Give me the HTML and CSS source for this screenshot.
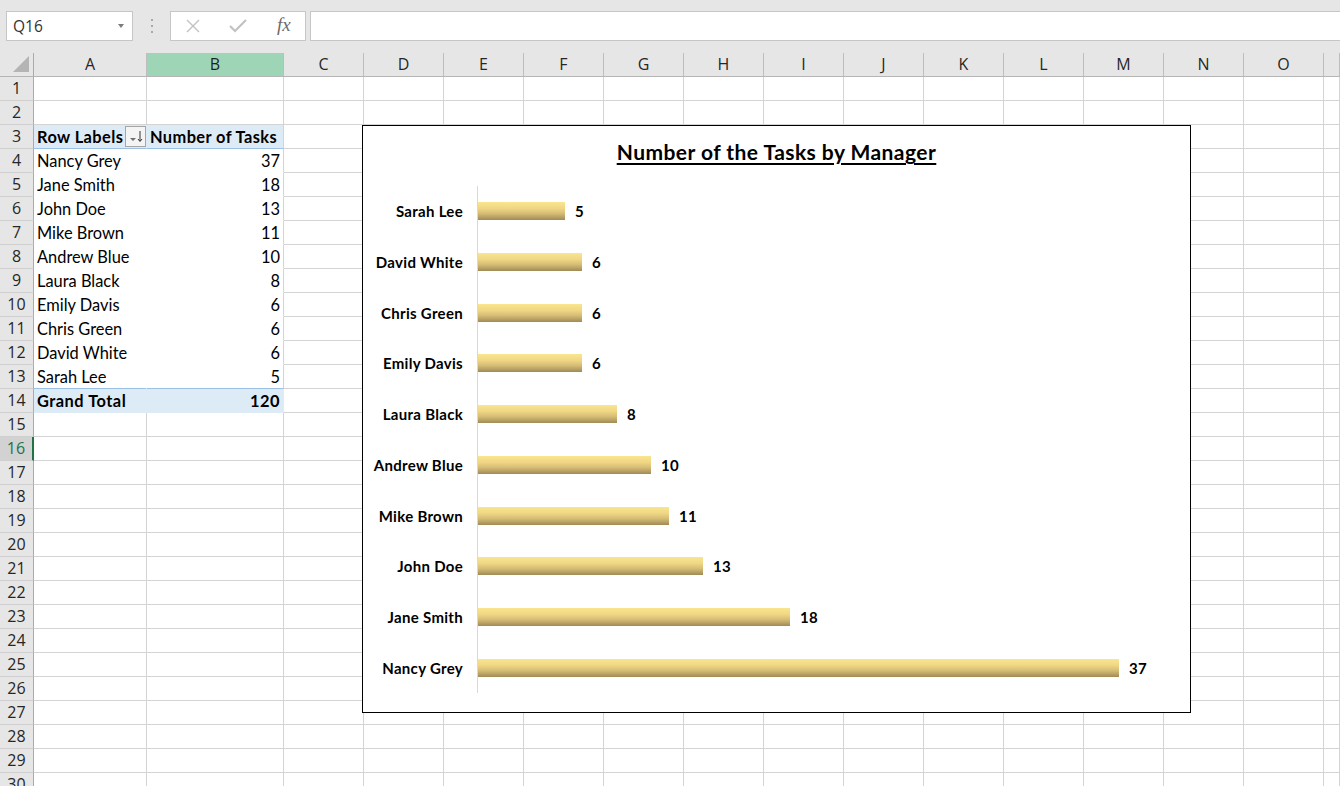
FILE: index.html
```html
<!DOCTYPE html>
<html>
<head>
<meta charset="utf-8">
<title>Tasks by Manager</title>
<link rel="stylesheet" href="styles.css">
</head>
<body>
<div class="app">
  <div class="toolbar">
    <div class="namebox"><span>Q16</span><span class="dd"></span></div>
    <div class="grip"><b></b><b></b><b></b></div>
    <div class="fbtns">
      <svg class="ic-x" width="16" height="14" viewBox="0 0 16 14"><path d="M2 1 L14 13 M14 1 L2 13" stroke="#c2c2c2" stroke-width="1.4" fill="none"/></svg>
      <svg class="ic-ok" width="18" height="14" viewBox="0 0 18 14"><path d="M1 7 L6 12 L17 1" stroke="#c2c2c2" stroke-width="2.2" fill="none"/></svg>
      <span class="fx">fx</span>
    </div>
    <div class="finput"></div>
  </div>

  <div class="sheet">
    <div class="colh">
      <div class="corner"><svg width="17" height="17" viewBox="0 0 17 17"><path d="M16 0 L16 16 L0 16 Z" fill="#b4b4b4"/></svg></div>
      <div>A</div><div class="csel">B</div><div>C</div><div>D</div><div>E</div><div>F</div><div>G</div><div>H</div><div>I</div><div>J</div><div>K</div><div>L</div><div>M</div><div>N</div><div>O</div><div></div>
    </div>

    <div class="row"><div class="rh">1</div><i></i><i></i><i></i><i></i><i></i><i></i><i></i><i></i><i></i><i></i><i></i><i></i><i></i><i></i><i></i><i></i></div>
    <div class="row"><div class="rh">2</div><i></i><i></i><i></i><i></i><i></i><i></i><i></i><i></i><i></i><i></i><i></i><i></i><i></i><i></i><i></i><i></i></div>
    <div class="row"><div class="rh">3</div><div class="ph pa"><span>Row Labels</span><span class="filter"><svg width="19" height="19" viewBox="0 0 19 19"><path d="M4 11 L10 11 L7 14 Z" fill="#6f6f6f"/><path d="M14 4 L14 14 M12 12 L14 14.5 L16 12" stroke="#333" stroke-width="1" fill="none"/></svg></span></div><div class="ph pb">Number of Tasks</div><i></i><i></i><i></i><i></i><i></i><i></i><i></i><i></i><i></i><i></i><i></i><i></i><i></i><i></i></div>
    <div class="row"><div class="rh">4</div><div class="pv pa">Nancy Grey</div><div class="pv num">37</div><i></i><i></i><i></i><i></i><i></i><i></i><i></i><i></i><i></i><i></i><i></i><i></i><i></i><i></i></div>
    <div class="row"><div class="rh">5</div><div class="pv pa">Jane Smith</div><div class="pv num">18</div><i></i><i></i><i></i><i></i><i></i><i></i><i></i><i></i><i></i><i></i><i></i><i></i><i></i><i></i></div>
    <div class="row"><div class="rh">6</div><div class="pv pa">John Doe</div><div class="pv num">13</div><i></i><i></i><i></i><i></i><i></i><i></i><i></i><i></i><i></i><i></i><i></i><i></i><i></i><i></i></div>
    <div class="row"><div class="rh">7</div><div class="pv pa">Mike Brown</div><div class="pv num">11</div><i></i><i></i><i></i><i></i><i></i><i></i><i></i><i></i><i></i><i></i><i></i><i></i><i></i><i></i></div>
    <div class="row"><div class="rh">8</div><div class="pv pa">Andrew Blue</div><div class="pv num">10</div><i></i><i></i><i></i><i></i><i></i><i></i><i></i><i></i><i></i><i></i><i></i><i></i><i></i><i></i></div>
    <div class="row"><div class="rh">9</div><div class="pv pa">Laura Black</div><div class="pv num">8</div><i></i><i></i><i></i><i></i><i></i><i></i><i></i><i></i><i></i><i></i><i></i><i></i><i></i><i></i></div>
    <div class="row"><div class="rh">10</div><div class="pv pa">Emily Davis</div><div class="pv num">6</div><i></i><i></i><i></i><i></i><i></i><i></i><i></i><i></i><i></i><i></i><i></i><i></i><i></i><i></i></div>
    <div class="row"><div class="rh">11</div><div class="pv pa">Chris Green</div><div class="pv num">6</div><i></i><i></i><i></i><i></i><i></i><i></i><i></i><i></i><i></i><i></i><i></i><i></i><i></i><i></i></div>
    <div class="row"><div class="rh">12</div><div class="pv pa">David White</div><div class="pv num">6</div><i></i><i></i><i></i><i></i><i></i><i></i><i></i><i></i><i></i><i></i><i></i><i></i><i></i><i></i></div>
    <div class="row"><div class="rh">13</div><div class="pv pa last">Sarah Lee</div><div class="pv num last">5</div><i></i><i></i><i></i><i></i><i></i><i></i><i></i><i></i><i></i><i></i><i></i><i></i><i></i><i></i></div>
    <div class="row"><div class="rh">14</div><div class="tot">Grand Total</div><div class="tot num">120</div><i></i><i></i><i></i><i></i><i></i><i></i><i></i><i></i><i></i><i></i><i></i><i></i><i></i><i></i></div>
    <div class="row"><div class="rh">15</div><i></i><i></i><i></i><i></i><i></i><i></i><i></i><i></i><i></i><i></i><i></i><i></i><i></i><i></i><i></i><i></i></div>
    <div class="row"><div class="rh rsel">16</div><i></i><i></i><i></i><i></i><i></i><i></i><i></i><i></i><i></i><i></i><i></i><i></i><i></i><i></i><i></i><i></i></div>
    <div class="row"><div class="rh">17</div><i></i><i></i><i></i><i></i><i></i><i></i><i></i><i></i><i></i><i></i><i></i><i></i><i></i><i></i><i></i><i></i></div>
    <div class="row"><div class="rh">18</div><i></i><i></i><i></i><i></i><i></i><i></i><i></i><i></i><i></i><i></i><i></i><i></i><i></i><i></i><i></i><i></i></div>
    <div class="row"><div class="rh">19</div><i></i><i></i><i></i><i></i><i></i><i></i><i></i><i></i><i></i><i></i><i></i><i></i><i></i><i></i><i></i><i></i></div>
    <div class="row"><div class="rh">20</div><i></i><i></i><i></i><i></i><i></i><i></i><i></i><i></i><i></i><i></i><i></i><i></i><i></i><i></i><i></i><i></i></div>
    <div class="row"><div class="rh">21</div><i></i><i></i><i></i><i></i><i></i><i></i><i></i><i></i><i></i><i></i><i></i><i></i><i></i><i></i><i></i><i></i></div>
    <div class="row"><div class="rh">22</div><i></i><i></i><i></i><i></i><i></i><i></i><i></i><i></i><i></i><i></i><i></i><i></i><i></i><i></i><i></i><i></i></div>
    <div class="row"><div class="rh">23</div><i></i><i></i><i></i><i></i><i></i><i></i><i></i><i></i><i></i><i></i><i></i><i></i><i></i><i></i><i></i><i></i></div>
    <div class="row"><div class="rh">24</div><i></i><i></i><i></i><i></i><i></i><i></i><i></i><i></i><i></i><i></i><i></i><i></i><i></i><i></i><i></i><i></i></div>
    <div class="row"><div class="rh">25</div><i></i><i></i><i></i><i></i><i></i><i></i><i></i><i></i><i></i><i></i><i></i><i></i><i></i><i></i><i></i><i></i></div>
    <div class="row"><div class="rh">26</div><i></i><i></i><i></i><i></i><i></i><i></i><i></i><i></i><i></i><i></i><i></i><i></i><i></i><i></i><i></i><i></i></div>
    <div class="row"><div class="rh">27</div><i></i><i></i><i></i><i></i><i></i><i></i><i></i><i></i><i></i><i></i><i></i><i></i><i></i><i></i><i></i><i></i></div>
    <div class="row"><div class="rh">28</div><i></i><i></i><i></i><i></i><i></i><i></i><i></i><i></i><i></i><i></i><i></i><i></i><i></i><i></i><i></i><i></i></div>
    <div class="row"><div class="rh">29</div><i></i><i></i><i></i><i></i><i></i><i></i><i></i><i></i><i></i><i></i><i></i><i></i><i></i><i></i><i></i><i></i></div>
    <div class="row"><div class="rh">30</div><i></i><i></i><i></i><i></i><i></i><i></i><i></i><i></i><i></i><i></i><i></i><i></i><i></i><i></i><i></i><i></i></div>

    <div class="chart">
      <div class="ctitle">Number of the Tasks by Manager</div>
      <div class="plot">
        <div class="cat"><span class="lbl">Sarah Lee</span><span class="track"><span class="bar" style="width:87px"></span><span class="val">5</span></span></div>
        <div class="cat"><span class="lbl">David White</span><span class="track"><span class="bar" style="width:104px"></span><span class="val">6</span></span></div>
        <div class="cat"><span class="lbl">Chris Green</span><span class="track"><span class="bar" style="width:104px"></span><span class="val">6</span></span></div>
        <div class="cat"><span class="lbl">Emily Davis</span><span class="track"><span class="bar" style="width:104px"></span><span class="val">6</span></span></div>
        <div class="cat"><span class="lbl">Laura Black</span><span class="track"><span class="bar" style="width:139px"></span><span class="val">8</span></span></div>
        <div class="cat"><span class="lbl">Andrew Blue</span><span class="track"><span class="bar" style="width:173px"></span><span class="val">10</span></span></div>
        <div class="cat"><span class="lbl">Mike Brown</span><span class="track"><span class="bar" style="width:191px"></span><span class="val">11</span></span></div>
        <div class="cat"><span class="lbl">John Doe</span><span class="track"><span class="bar" style="width:225px"></span><span class="val">13</span></span></div>
        <div class="cat"><span class="lbl">Jane Smith</span><span class="track"><span class="bar" style="width:312px"></span><span class="val">18</span></span></div>
        <div class="cat"><span class="lbl">Nancy Grey</span><span class="track"><span class="bar" style="width:641px"></span><span class="val">37</span></span></div>
      </div>
    </div>
  </div>
</div>
</body>
</html>
```
FILE: styles.css
```css
html, body {
  margin: 0;
  padding: 0;
  width: 1340px;
  height: 786px;
  overflow: hidden;
  background: #ffffff;
}

.app {
  width: 1340px;
  height: 786px;
  overflow: hidden;
  font-family: Lato, "Liberation Sans", sans-serif;
}

/* ---------- toolbar ---------- */
.toolbar {
  height: 53px;
  background: #e6e6e6;
  display: flex;
  align-items: flex-start;
  padding-top: 11px;
  box-sizing: border-box;
}

.namebox {
  margin-left: 6px;
  width: 127px;
  height: 30px;
  box-sizing: border-box;
  background: #fff;
  border: 1px solid #c6c6c6;
  display: flex;
  align-items: center;
  justify-content: space-between;
  padding: 0 8px 0 6px;
  font-family: "Open Sans", "Noto Sans", sans-serif;
  font-size: 15.5px;
  color: #333;
}

.dd {
  width: 0;
  height: 0;
  border-left: 3.5px solid transparent;
  border-right: 3.5px solid transparent;
  border-top: 4px solid #7a7a7a;
}

.grip {
  width: 37px;
  height: 30px;
  display: flex;
  flex-direction: column;
  align-items: center;
  justify-content: center;
  gap: 4px;
}

.grip b {
  width: 2px;
  height: 2px;
  background: #a9a9a9;
}

.fbtns {
  width: 136px;
  height: 30px;
  box-sizing: border-box;
  background: #fff;
  border: 1px solid #c6c6c6;
  display: flex;
  align-items: center;
  padding-left: 14px;
}

.ic-x { margin-right: 28px; }
.ic-ok { margin-right: 30px; }

.fx {
  font-family: "Liberation Serif", serif;
  font-style: italic;
  font-size: 19px;
  color: #6b6b6b;
  margin-top: -2px;
}

.finput {
  margin-left: 4px;
  flex: 1;
  height: 30px;
  box-sizing: border-box;
  background: #fff;
  border: 1px solid #c6c6c6;
  border-right: none;
}

/* ---------- sheet ---------- */
.sheet {
  position: relative;
}

.colh,
.row {
  display: grid;
  grid-template-columns: 34px 113px 137px repeat(13, 80px) 16px;
  height: 24px;
}

.colh > * {
  box-sizing: border-box;
  background: #e6e6e6;
  border-right: 1px solid #bdbdbd;
  border-bottom: 1px solid #b5b5b5;
  text-align: center;
  font-family: "Open Sans", "Noto Sans", sans-serif;
  font-size: 16px;
  line-height: 23px;
  color: #262626;
}

.colh .corner {
  border-right-color: #ababab;
  display: flex;
  align-items: flex-end;
  justify-content: flex-end;
  padding: 0 3px 3px 0;
}

.colh .corner svg { display: block; }

.colh .csel {
  background: #9fd5b7;
  color: #1f1f1f;
}

.row > * {
  box-sizing: border-box;
  border-right: 1px solid #d4d4d4;
  border-bottom: 1px solid #d4d4d4;
  font-style: normal;
  font-family: Lato, "Liberation Sans", sans-serif;
  font-size: 16.4px;
  line-height: 22px;
  padding: 1px 3px 0 3px;
  white-space: nowrap;
  overflow: hidden;
  color: #000;
}

.row > .rh {
  background: #e6e6e6;
  border-right-color: #ababab;
  border-bottom-color: #cfcfcf;
  text-align: center;
  padding: 0;
  line-height: 23px;
  font-family: "Open Sans", "Noto Sans", sans-serif;
  font-size: 16px;
  color: #262626;
}

.row > .rsel {
  background: #d2d2d2;
  color: #217346;
  border-right: 2px solid #217346;
}

/* pivot table */
.row > .ph {
  background: #ddebf7;
  font-weight: 700;
  letter-spacing: 0.4px;
  border-bottom-color: #9bc2e6;
}

.row > .ph.pa {
  border-right-color: #ddebf7;
  display: flex;
  align-items: center;
  justify-content: space-between;
  padding-right: 0;
  padding-top: 0;
}

.row > .ph.pa span:first-child {
  padding-top: 1px;
}

.filter {
  width: 21px;
  height: 21px;
  box-sizing: border-box;
  border: 1px solid #a6a6a6;
  background: #f4f4f4;
  display: flex;
  align-items: center;
  justify-content: center;
}

.filter svg { display: block; }

.row > .pv {
  border-bottom-color: #ffffff;
}

.row > .pv.pa {
  border-right-color: #ffffff;
}

.row > .last {
  border-bottom-color: #9bc2e6;
}

.row > .tot {
  background: #ddebf7;
  font-weight: 700;
  letter-spacing: 0.5px;
  border-right-color: #ddebf7;
  border-bottom-color: #ddebf7;
}

.row > .num {
  text-align: right;
}

/* ---------- chart ---------- */
.chart {
  position: absolute;
  left: 362px;
  top: 72px;
  width: 829px;
  height: 588px;
  box-sizing: border-box;
  border: 1px solid #000;
  background: #fff;
  display: flex;
  flex-direction: column;
  font-family: Lato, "Liberation Sans", sans-serif;
}

.ctitle {
  margin-top: 14px;
  text-align: center;
  font-weight: 700;
  font-size: 21px;
  letter-spacing: 0.45px;
  line-height: 24px;
  text-decoration: underline;
  text-underline-offset: 3px;
  text-decoration-thickness: 1.5px;
  color: #000;
}

.plot {
  margin-top: 22px;
  height: 507px;
  display: flex;
  flex-direction: column;
}

.cat {
  flex: 1;
  display: flex;
  align-items: stretch;
}

.lbl {
  width: 115px;
  box-sizing: border-box;
  padding-right: 15px;
  text-align: right;
  font-weight: 700;
  font-size: 15px;
  letter-spacing: 0.3px;
  color: #000;
  display: flex;
  align-items: center;
  justify-content: flex-end;
}

.track {
  flex: 1;
  border-left: 1px solid #d9d9d9;
  display: flex;
  align-items: center;
  margin-left: -1px;
}

.bar {
  height: 18px;
  background: linear-gradient(to bottom, #fae68f 0%, #f0d685 35%, #d4bc75 65%, #a08a56 100%);
}

.val {
  margin-left: 10px;
  font-weight: 700;
  font-size: 15px;
  letter-spacing: 0.3px;
  color: #000;
}
```
